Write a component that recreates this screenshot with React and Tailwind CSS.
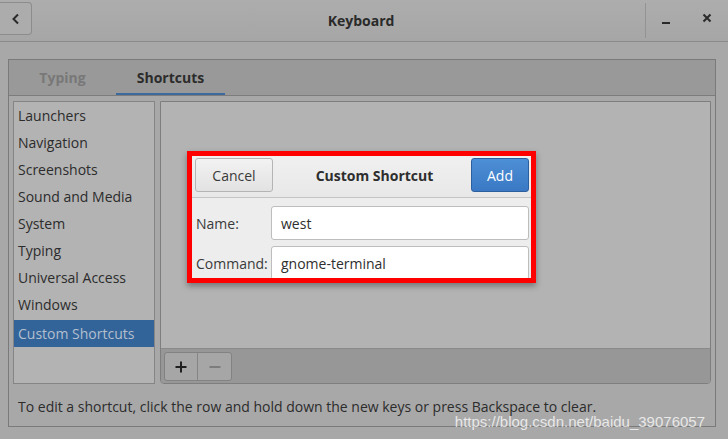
import React from "react";

const categories = [
  "Launchers",
  "Navigation",
  "Screenshots",
  "Sound and Media",
  "System",
  "Typing",
  "Universal Access",
  "Windows",
];

const App = () => {
  return (
    <div className="relative w-[728px] h-[439px] overflow-hidden bg-[#a8a8a8] text-[#2c2c2c] font-['Open_Sans',sans-serif]">
      {/* title bar */}
      <div className="flex h-[42px] border-b border-[#8a8a8a] bg-gradient-to-b from-[#adadad] to-[#a6a6a6]">
        <div className="mt-[2px] flex h-[33px] w-[32px] items-center justify-center rounded-r-[4px] border border-l-0 border-[#8c8c8c] bg-[#acacac]">
          <svg width="10" height="12" viewBox="0 0 10 12">
            <path d="M7 1.5 L2.5 6 L7 10.5" fill="none" stroke="#2a2a2a" strokeWidth="2" />
          </svg>
        </div>
        <div className="flex flex-1 items-center justify-center pl-[45px] text-[14px] font-bold text-[#2a2a2a]">
          Keyboard
        </div>
        <div className="my-[3px] w-px bg-[#939393]" />
        <div className="flex w-[40px] items-center justify-center">
          <svg width="10" height="10" viewBox="0 0 10 10">
            <path d="M1 7 H9" stroke="#2a2a2a" strokeWidth="2" />
          </svg>
        </div>
        <div className="flex w-[42px] items-center justify-center pb-[5px]">
          <svg width="10" height="10" viewBox="0 0 10 10">
            <path d="M1.5 1.5 L8.5 8.5 M8.5 1.5 L1.5 8.5" stroke="#2a2a2a" strokeWidth="2" />
          </svg>
        </div>
      </div>

      {/* notebook */}
      <div className="ml-[8px] mt-[17px] flex h-[368px] w-[708px] flex-col border border-[#7a7a7a]">
        <div className="flex h-[36px] border-b border-[#7c7c7c] bg-[#999999] text-[14px] font-bold">
          <div className="flex w-[107px] items-center justify-center text-[#787878]">Typing</div>
          <div className="flex w-[109px] items-center justify-center border-b-[2px] border-[#3d6a9e] pt-[2px] text-[#2c2c2c]">
            Shortcuts
          </div>
        </div>

        <div className="flex gap-[5px] px-[4px] pt-[5px]">
          <div className="h-[283px] w-[142px] border border-[#858585] bg-[#b3b3b3] text-[14px]">
            {categories.map((c) => (
              <div key={c} className="flex h-[27px] items-center pl-[4px]">
                {c}
              </div>
            ))}
            <div className="mt-[2px] flex h-[27px] items-center bg-[#32649a] pl-[4px] text-[#b3bfce]">
              Custom Shortcuts
            </div>
          </div>

          <div className="flex h-[283px] flex-1 flex-col rounded-b-[4px] border border-[#7e7e7e] bg-[#b3b3b3]">
            <div className="flex-1" />
            <div className="flex h-[35px] items-start border-t border-[#8a8a8a] bg-[#979797] px-[3px] pt-[3px] rounded-b-[3px]">
              <div className="flex h-[29px] overflow-hidden rounded-[3px] border border-[#828282] bg-[#a6a6a6]">
                <div className="flex w-[33px] items-center justify-center border-r border-[#858585]">
                  <svg width="12" height="12" viewBox="0 0 12 12">
                    <path d="M6 0.5 V11.5 M0.5 6 H11.5" stroke="#1f1f1f" strokeWidth="2" />
                  </svg>
                </div>
                <div className="flex w-[33px] items-center justify-center">
                  <svg width="12" height="12" viewBox="0 0 12 12">
                    <path d="M0.5 6 H11.5" stroke="#7c7c7c" strokeWidth="2" />
                  </svg>
                </div>
              </div>
            </div>
          </div>
        </div>

        <p className="pl-[9px] pt-[13px] text-[14px] leading-[20px] text-[#2c2c2c]">
          To edit a shortcut, click the row and hold down the new keys or press Backspace to clear.
        </p>
      </div>

      {/* custom shortcut dialog */}
      <div className="absolute left-[187px] top-[151px] h-[132px] w-[349px] overflow-hidden border-[5px] border-[#ff0000] bg-[#ededed] shadow-[0_3px_6px_rgba(0,0,0,0.35)]">
        <div className="flex h-[42px] items-start justify-between border-b border-[#c4c4c4] bg-gradient-to-b from-[#f0f0f0] to-[#e8e8e8] pt-[2px]">
          <button className="ml-[3px] h-[34px] w-[78px] rounded-[3px] border border-[#b4b4b4] bg-gradient-to-b from-[#f2f2f2] to-[#e2e2e2] text-[14px] text-[#3a3a3a]">
            Cancel
          </button>
          <div className="flex h-[34px] items-center pl-[5px] text-[14px] font-bold text-[#2e2e2e]">Custom Shortcut</div>
          <button className="mr-[2px] h-[34px] w-[58px] rounded-[3px] border border-[#2c5f9e] bg-gradient-to-b from-[#4d8fd6] to-[#3a78c3] text-[14px] text-white">
            Add
          </button>
        </div>
        <div className="flex flex-col gap-[6px] pt-[8px]">
          <div className="flex items-center">
            <div className="w-[79px] pl-[4px] text-[14px] text-[#3a3a3a]">Name:</div>
            <div className="flex h-[34px] w-[258px] items-center rounded-[3px] border border-[#bdbdbd] bg-white pl-[9px] text-[14px] text-[#2e2e2e]">
              west
            </div>
          </div>
          <div className="flex items-center">
            <div className="w-[79px] pl-[4px] text-[14px] text-[#3a3a3a]">Command:</div>
            <div className="flex h-[34px] w-[258px] items-center rounded-[3px] border border-[#bdbdbd] bg-white pl-[9px] text-[14px] text-[#2e2e2e]">
              gnome-terminal
            </div>
          </div>
        </div>
      </div>

      {/* watermark */}
      <div className="absolute right-[23px] top-[413px] font-['Liberation_Sans',Arial,sans-serif] text-[15px] leading-[17px] text-white/75">
        https://blog.csdn.net/baidu_39076057
      </div>
    </div>
  );
};

export default App;
